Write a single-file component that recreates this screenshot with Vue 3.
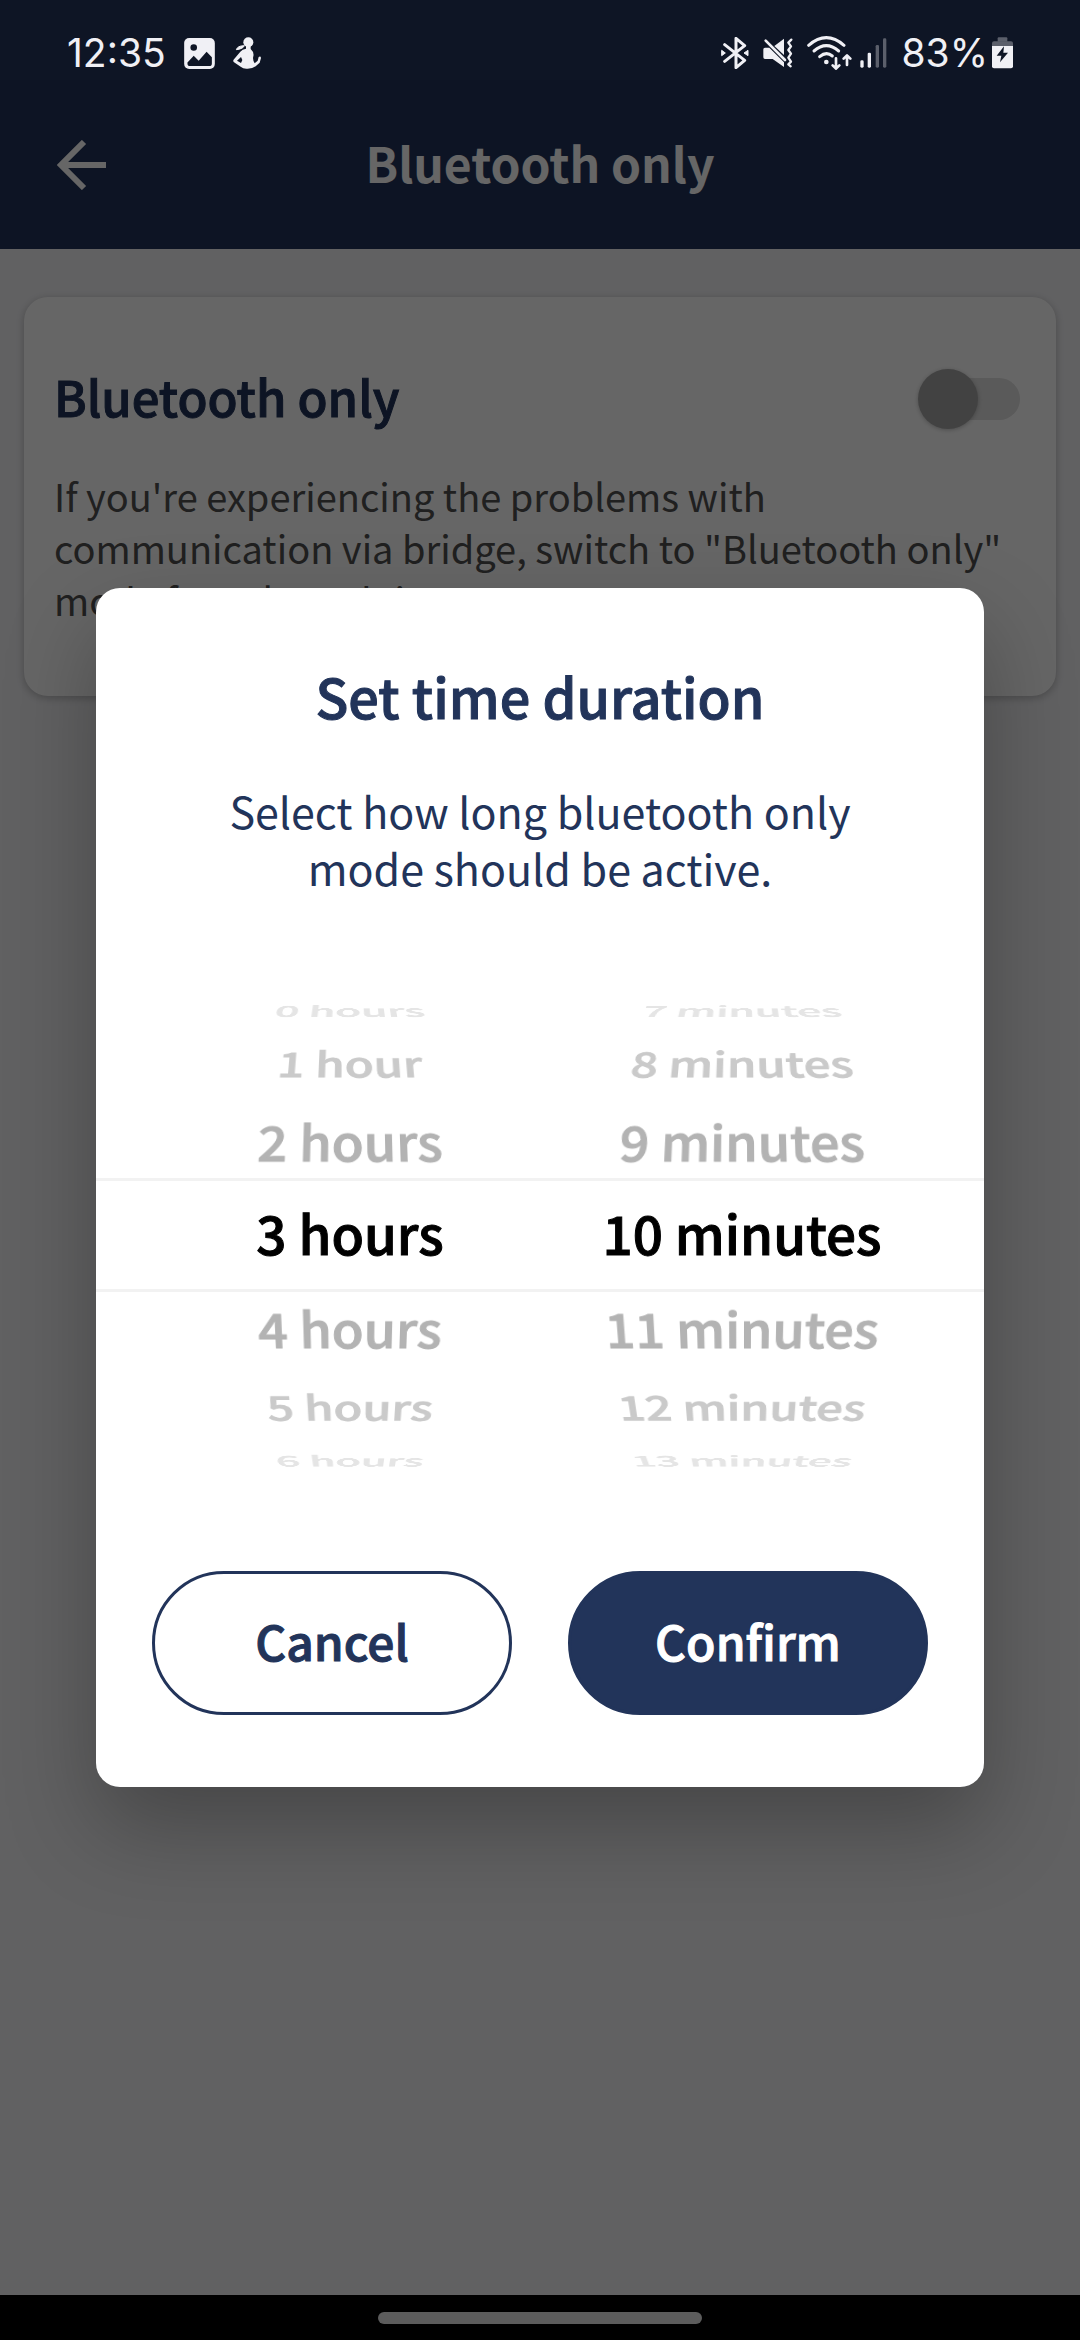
<script setup>
import { ref } from 'vue'

const bluetoothOnly = ref(false)

const columns = [
  {
    label: 'Hours',
    rows: ['0 hours', '1 hour', '2 hours', '3 hours', '4 hours', '5 hours', '6 hours'],
  },
  {
    label: 'Minutes',
    rows: ['7 minutes', '8 minutes', '9 minutes', '10 minutes', '11 minutes', '12 minutes', '13 minutes'],
  },
]

const rowClasses = ['far above', 'mid above', 'near above', 'selected', 'near below', 'mid below', 'far below']
</script>

<template>
  <div class="phone">
    <div class="status">
      <span class="clock">12:35</span>
      <svg class="ic-image" width="31" height="31" viewBox="426 83 93 94" aria-hidden="true">
        <rect x="426" y="83" width="93" height="94" rx="15" fill="#f0f0f5" />
        <circle cx="455" cy="112" r="10" fill="#0e1525" />
        <path d="M436 157 L455 137 L470 152 L494 125 L510 141 V160 Q510 168 502 168 H444 Q436 168 436 160Z" fill="#0e1525" />
      </svg>
      <svg class="ic-person" width="28" height="32" viewBox="572 82 84 96" aria-hidden="true">
        <ellipse cx="618" cy="98" rx="15" ry="15" fill="#f0f0f5" />
        <path d="M582 120 Q586 108 606 108 Q602 118 582 120Z" fill="#f0f0f5" stroke="#f0f0f5" stroke-width="3" />
        <path d="M611 108 H625 V118 Q636 128 633 140 Q630 150 637 161 L646 153 L649 142 Q655 138 656 145 L652 159 L640 170 Q630 178 612 177 Q602 177 595 171 L574 157 Q571 153 575 149 L594 126 Q600 119 611 117Z" fill="#f0f0f5" />
        <path d="M584 153 L596 142 L600 151 L596 160Z" fill="#0e1525" />
      </svg>
      <span class="spacer"></span>
      <svg class="ic-bt" width="28" height="32" viewBox="61 81 84 96" aria-hidden="true">
        <path d="M72 104 L132 151 L106 173 V85 L132 107 L72 154" fill="none" stroke="#f0f0f5" stroke-width="9" stroke-linecap="round" stroke-linejoin="round" />
        <path d="M63 121 L74 129 L63 137Z M142 121 L130 129 L142 137Z" fill="#f0f0f5" stroke="#f0f0f5" stroke-width="3" />
      </svg>
      <svg class="ic-mute" width="30" height="30" viewBox="188 84 90 90" aria-hidden="true">
        <path d="M194 113 H207 L251 157 V171 L217 147 H194 Q189 147 189 142 V118 Q189 113 194 113Z" fill="#f0f0f5" />
        <path d="M251 86 V135 L222 108Z" fill="#f0f0f5" />
        <path d="M196 92 L254 150" stroke="#f0f0f5" stroke-width="8" stroke-linecap="round" />
        <path d="M273 89 L264 98 L272 109 L264 120 L272 131 L264 143 L272 155 L264 163 L271 169" fill="none" stroke="#f0f0f5" stroke-width="7" stroke-linecap="round" stroke-linejoin="round" />
      </svg>
      <svg class="ic-wifi" width="45" height="34" viewBox="318 76 135 102" aria-hidden="true">
        <g fill="none" stroke="#f0f0f5" stroke-width="9" stroke-linecap="round">
          <path d="M323 104 Q376 58 429 104" />
          <path d="M339 121 Q376 89 413 121" />
          <path d="M356 138 Q376 121 394 136" />
        </g>
        <circle cx="376" cy="154" r="7" fill="#f0f0f5" />
        <g fill="none" stroke="#f0f0f5" stroke-width="8" stroke-linecap="round" stroke-linejoin="round">
          <path d="M405 143 V173 M395 164 L405 174 L415 164" />
          <path d="M438 163 V135 M428 144 L438 134 L448 144" />
        </g>
      </svg>
      <svg class="ic-signal" width="27" height="30" viewBox="480 83 81 90" aria-hidden="true">
        <rect x="481" y="150" width="10" height="22" rx="4" fill="#f0f0f5" />
        <rect x="503" y="127" width="10" height="45" rx="4" fill="#f0f0f5" />
        <rect x="527" y="104" width="10" height="68" rx="4" fill="#5b5f6b" />
        <rect x="549" y="84" width="10" height="88" rx="4" fill="#5b5f6b" />
      </svg>
      <span class="percent">83%</span>
      <svg class="ic-battery" width="21" height="32" viewBox="876 80 63 96" aria-hidden="true">
        <path d="M893 94 V84 Q893 81 896 81 H919 Q922 81 922 84 V94Z" fill="#5b5f6b" />
        <path d="M876 108 V99 Q876 93 882 93 H933 Q939 93 939 99 V108Z" fill="#5b5f6b" />
        <path d="M876 107 H939 V168 Q939 174 933 174 H882 Q876 174 876 168Z" fill="#f0f0f5" />
        <path d="M912 108 L890 136 H904 L900 156 L924 127 H910Z" fill="#0e1525" />
      </svg>
    </div>

    <div class="stage">
      <header class="appbar">
        <button class="back" type="button" aria-label="Back">
          <svg width="50" height="50" viewBox="0 0 50 50">
            <path d="M27 2 L4 25 L27 48 M4 25 H49" fill="none" stroke="#fff" stroke-width="6" />
          </svg>
        </button>
        <h1>Bluetooth only</h1>
      </header>

      <main class="content">
        <section class="card">
          <div class="card-head">
            <label for="bt-only">Bluetooth only</label>
            <input id="bt-only" v-model="bluetoothOnly" class="toggle" type="checkbox" role="switch" />
          </div>
          <p>If you're experiencing the problems with communication via bridge, switch to "Bluetooth only" mode for selected time.</p>
        </section>
      </main>

      <div class="scrim">
        <div class="dialog" role="dialog" aria-modal="true" aria-labelledby="dlg-title">
          <h2 id="dlg-title">Set time duration</h2>
          <p class="lead">Select how long bluetooth only mode should be active.</p>
          <div class="picker">
            <ul v-for="col in columns" :key="col.label" class="wheel" role="listbox" :aria-label="col.label">
              <li
                v-for="(row, i) in col.rows"
                :key="row"
                :class="rowClasses[i]"
                role="option"
                :aria-selected="i === 3"
              >{{ row }}</li>
            </ul>
          </div>
          <div class="actions">
            <button class="btn outline" type="button">Cancel</button>
            <button class="btn filled" type="button">Confirm</button>
          </div>
        </div>
      </div>
    </div>

    <div class="navbar"><span class="pill"></span></div>
  </div>
</template>

<style>
body {
  background: #000;
}
</style>

<style scoped>
.phone {
  min-height: 100vh;
  display: flex;
  flex-direction: column;
  font-family: "Noto Sans CJK SC", "Noto Sans", sans-serif;
}
h1, h2, p, ul {
  margin: 0;
  padding: 0;
}
button {
  font-family: inherit;
  cursor: pointer;
}

.status {
  box-sizing: border-box;
  height: 80px;
  padding: 26px 67px 0;
  display: flex;
  align-items: center;
  background: #0e1525;
  color: #f0f0f5;
  font-family: Inter, Roboto, sans-serif;
  font-size: 39px;
  line-height: 54px;
}
.status svg {
  flex: none;
}
.spacer {
  flex: 1;
}
.ic-image, .ic-person {
  margin-left: 18px;
}
.ic-mute, .ic-wifi, .percent {
  margin-left: 14px;
}
.ic-signal {
  margin-left: 8px;
}
.ic-battery {
  margin-left: 4px;
}

.stage {
  flex: 1;
  position: relative;
  display: flex;
  flex-direction: column;
  background: #f3f3f6;
}
.appbar {
  height: 169px;
  display: grid;
  grid-template-columns: 160px 1fr 160px;
  align-items: center;
  background: #22345a;
  color: #fff;
}
.appbar h1 {
  padding-bottom: 6px;
  font-size: 48px;
  font-weight: 700;
  line-height: 64px;
  text-align: center;
}
.back {
  justify-self: start;
  margin-left: 57px;
  padding: 0;
  border: 0;
  background: none;
}
.back svg {
  display: block;
}
.content {
  padding: 48px 24px;
}
.card {
  padding: 69px 36px 70px 30px;
  border-radius: 24px;
  background: #fff;
  box-shadow: 0 2px 8px rgba(0, 0, 0, 0.25);
}
.card-head {
  display: flex;
  align-items: center;
  justify-content: space-between;
}
.card-head label {
  padding-bottom: 6px;
  font-size: 49px;
  font-weight: 500;
  line-height: 60px;
  color: #22345a;
  -webkit-text-stroke: 1px;
}
.card p {
  margin-top: 38px;
  font-size: 38px;
  line-height: 52px;
  color: #505050;
}
.toggle {
  appearance: none;
  position: relative;
  margin: 0;
  width: 96px;
  height: 42px;
  border-radius: 21px;
  background: #e0e0e0;
}
.toggle::before {
  content: "";
  position: absolute;
  left: -6px;
  top: -9px;
  width: 60px;
  height: 60px;
  border-radius: 50%;
  background: #a5a5a5;
  box-shadow: 0 1px 4px rgba(0, 0, 0, 0.25);
}
.toggle:checked::before {
  left: 42px;
}

.scrim {
  position: absolute;
  inset: 0;
  padding: 0 96px;
  display: flex;
  align-items: center;
  background: rgba(0, 0, 0, 0.6);
}
.dialog {
  flex: 1;
  padding: 76px 0 72px;
  border-radius: 24px;
  background: #fff;
  color: #22345a;
  text-align: center;
  box-shadow: 0 40px 90px rgba(0, 0, 0, 0.28);
}
.dialog h2 {
  font-size: 54px;
  font-weight: 500;
  line-height: 64px;
  -webkit-text-stroke: 1px;
}
.lead {
  margin-top: 54px;
  padding: 0 100px;
  font-size: 43px;
  line-height: 57px;
}
.picker {
  position: relative;
  margin-top: 102px;
  padding: 0 46px 0 58px;
  display: flex;
  overflow: hidden;
}
.picker::before {
  content: "";
  position: absolute;
  left: 0;
  right: 0;
  top: 180px;
  height: 108px;
  border: solid #f2f2f2;
  border-width: 3px 0;
}
.wheel {
  flex: 1;
  list-style: none;
  font-weight: 500;
  white-space: nowrap;
  -webkit-text-stroke: 1px;
}
.wheel li {
  box-sizing: border-box;
  display: flex;
  align-items: center;
  justify-content: center;
}
.selected {
  height: 114px;
  font-size: 53px;
  color: #000;
}
.near {
  height: 76px;
  font-size: 52px;
  color: #b3b3b3;
}
.mid {
  height: 80px;
  font-size: 47px;
  color: #cacaca;
}
.far {
  height: 24px;
  font-size: 42px;
  color: #e5e5e5;
}
.selected, .near.below, .mid.below {
  padding-bottom: 6px;
}
.near.above { transform: perspective(700px) rotateX(24deg); }
.near.below { transform: perspective(700px) rotateX(-24deg); }
.mid.above { transform: perspective(700px) rotateX(45deg); }
.mid.below { transform: perspective(700px) rotateX(-45deg); }
.far.above { transform: perspective(700px) rotateX(70deg); }
.far.below { transform: perspective(700px) rotateX(-70deg); }

.actions {
  margin-top: 99px;
  padding: 0 56px;
  display: flex;
  gap: 56px;
}
.btn {
  flex: 1;
  height: 144px;
  padding: 0 0 6px;
  border: 3px solid #22345a;
  border-radius: 72px;
  font-size: 48px;
  font-weight: 500;
  -webkit-text-stroke: 1px;
}
.outline {
  background: #fff;
  color: #22345a;
}
.filled {
  background: #22345a;
  color: #fff;
}

.navbar {
  height: 45px;
  display: flex;
  align-items: center;
  justify-content: center;
  background: #000;
}
.pill {
  width: 30%;
  height: 12px;
  border-radius: 6px;
  background: #5c5c5c;
}
</style>
